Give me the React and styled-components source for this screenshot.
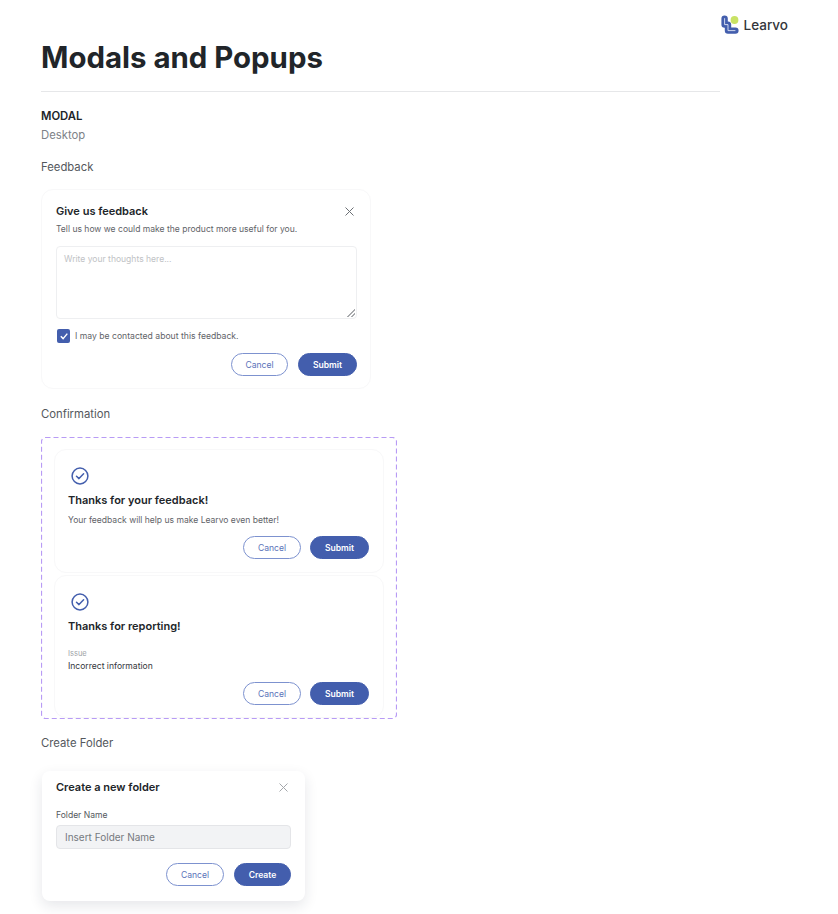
import React from 'react'
import styled, { createGlobalStyle } from 'styled-components'

const GlobalStyle = createGlobalStyle`
  * { box-sizing: border-box; }
  body {
    margin: 0;
    background: #fff;
    font-family: "Inter", "Liberation Sans", sans-serif;
    color: #212529;
  }
`

const Page = styled.div`
  width: 838px;
  height: 914px;
  overflow: hidden;
  padding: 14px 50px 0 41px;
  display: flex;
  flex-direction: column;
`

const LogoRow = styled.div`
  display: flex;
  justify-content: flex-end;
  align-items: center;
  gap: 5px;
  height: 21px;
`

const LogoText = styled.span`
  font-size: 13.5px;
  font-weight: 500;
  color: #33363b;
`

const Title = styled.h1`
  margin: 5px 0 0;
  font-size: 29.4px;
  line-height: 35px;
  font-weight: 700;
  color: #212529;
`

const Divider = styled.hr`
  width: 679px;
  margin: 16px 0 0;
  border: 0;
  border-top: 1px solid #e6e7e9;
`

const SectionName = styled.div`
  margin-top: 17px;
  font-size: 11.3px;
  line-height: 14px;
  font-weight: 600;
`

const Platform = styled.div`
  margin-top: 5px;
  font-size: 11.3px;
  line-height: 14px;
  color: #7d8287;
`

const GroupLabel = styled.div`
  margin-top: ${p => p.$top || 18}px;
  font-size: 11.3px;
  line-height: 14px;
  color: #54585d;
`

const Card = styled.section`
  width: ${p => p.$width || 330}px;
  height: ${p => p.$height}px;
  margin-top: ${p => p.$top || 0}px;
  padding: ${p => p.$pad || '14px 13px 0 14px'};
  background: #fff;
  border: 1px solid #f8f8f9;
  border-radius: 12px;
  display: flex;
  flex-direction: column;
  flex-shrink: 0;
`

const FolderCard = styled(Card)`
  margin-left: 1px;
  border: 0;
  border-radius: 8px;
  box-shadow: 0 5px 14px rgba(30, 40, 60, 0.11);
`

const CardHead = styled.div`
  display: flex;
  justify-content: space-between;
  align-items: center;
`

const CardTitle = styled.h2`
  margin: ${p => p.$top || 0}px 0 0;
  font-size: 11px;
  line-height: 14px;
  font-weight: 600;
  color: #212529;
`

const CloseBtn = styled.button`
  border: 0;
  padding: 0;
  margin-right: 2px;
  background: none;
  display: flex;
  color: ${p => p.$color || '#6c7075'};
`

const Hint = styled.p`
  margin: ${p => p.$top || 5}px 0 0;
  font-size: 8.55px;
  line-height: 12px;
  color: #5f6368;
`

const Thoughts = styled.textarea`
  display: block;
  width: 301px;
  height: 73px;
  margin-top: 11px;
  padding: 6px 7px;
  border: 1px solid #eeeff1;
  border-radius: 4px;
  font-family: inherit;
  font-size: 8.55px;
  line-height: 12px;
  outline: none;
  &::placeholder { color: #c0c2c5; }
  &::-webkit-resizer {
    background: linear-gradient(135deg, transparent 48%, #a8aaad 48% 58%, transparent 58% 72%, #a8aaad 72% 82%, transparent 82%) no-repeat right 1px bottom 1px / 8px 8px;
  }
`

const CheckRow = styled.label`
  display: flex;
  align-items: center;
  gap: 5px;
  margin-top: 10px;
  margin-left: 1px;
  font-size: 8.65px;
  color: #5f6368;
`

const CheckBox = styled.span`
  width: 13px;
  height: 14px;
  border-radius: 2px;
  background: #435ead;
  display: flex;
  align-items: center;
  justify-content: center;
`

const Actions = styled.div`
  display: flex;
  justify-content: flex-end;
  gap: ${p => p.$gap || 10}px;
  margin-top: ${p => p.$top || 10}px;
`

const Pill = styled.button`
  width: ${p => p.$width || 58}px;
  height: 23px;
  padding: 0;
  border-radius: 12px;
  border: 1px solid ${p => (p.$primary ? '#435ead' : '#7d92cf')};
  background: ${p => (p.$primary ? '#435ead' : '#fff')};
  color: ${p => (p.$primary ? '#fff' : '#5a72b9')};
  font-family: inherit;
  font-size: 8.55px;
  font-weight: ${p => (p.$primary ? 600 : 400)};
`

const DashedFrame = styled.div`
  position: relative;
  width: 356px;
  height: 282px;
  margin-top: 16px;
  padding: 12px 13px 0 13px;
  display: flex;
  flex-direction: column;
  gap: 2px;
  overflow: hidden;
`

const DashedLine = styled.svg`
  position: absolute;
  inset: 0;
  width: 100%;
  height: 100%;
  pointer-events: none;
`

const TickWrap = styled.div`
  display: flex;
  margin-left: 3px;
`

const IssueLabel = styled.div`
  margin-top: 16px;
  font-size: 7.5px;
  line-height: 10px;
  color: #a0a3a7;
`

const IssueValue = styled.div`
  margin-top: 1px;
  font-size: 8.55px;
  line-height: 12px;
  color: #33363b;
`

const FieldLabel = styled.div`
  margin-top: 15px;
  font-size: 8.55px;
  line-height: 12px;
  color: #54585d;
`

const FolderInput = styled.input`
  display: block;
  width: 235px;
  height: 24px;
  margin-top: 4px;
  padding: 0 8px;
  background: #f2f3f5;
  border: 1px solid #e4e5e8;
  border-radius: 4px;
  font-family: inherit;
  font-size: 10px;
  outline: none;
  &::placeholder { color: #75797e; }
`

const CloseIcon = () => (
  <svg width="11" height="11" viewBox="0 0 11 11" fill="none" stroke="currentColor" strokeWidth="1">
    <path d="M1.5 1.5l8 8M9.5 1.5l-8 8" />
  </svg>
)

const Tick = () => (
  <svg width="18" height="18" viewBox="0 0 18 18" fill="none" stroke="#435ead" strokeWidth="1.5" strokeLinecap="round" strokeLinejoin="round">
    <circle cx="9" cy="9" r="7.9" />
    <path d="M5.5 9.2l2.5 2.4 4.6-4.8" />
  </svg>
)

const Logo = () => (
  <svg width="18" height="19" viewBox="0 0 18 19" fill="none">
    <path d="M3.6 3.6v6h3.4v6h7.4" stroke="#435ead" strokeWidth="6.4" strokeLinecap="round" strokeLinejoin="round" />
    <path d="M3.6 3.6v6h3.4v6h7" stroke="#dfe5f5" strokeWidth="0.9" strokeLinecap="round" strokeLinejoin="round" />
    <circle cx="13.5" cy="5" r="4.5" fill="#fff" />
    <circle cx="13.5" cy="5" r="3.9" fill="#c9e265" />
  </svg>
)

const CheckMark = () => (
  <svg width="10" height="10" viewBox="0 0 10 10" fill="none" stroke="#fff" strokeWidth="1.4">
    <path d="M1.8 5.2l2.3 2.4 4.2-5" />
  </svg>
)

const App = () => (
  <Page>
    <GlobalStyle />
    <LogoRow>
      <Logo />
      <LogoText>Learvo</LogoText>
    </LogoRow>
    <Title>Modals and Popups</Title>
    <Divider />
    <SectionName>MODAL</SectionName>
    <Platform>Desktop</Platform>

    <GroupLabel>Feedback</GroupLabel>
    <Card $height={200} $top={15}>
      <CardHead>
        <CardTitle>Give us feedback</CardTitle>
        <CloseBtn><CloseIcon /></CloseBtn>
      </CardHead>
      <Hint>Tell us how we could make the product more useful for you.</Hint>
      <Thoughts placeholder="Write your thoughts here..." />
      <CheckRow>
        <CheckBox><CheckMark /></CheckBox>
        I may be contacted about this feedback.
      </CheckRow>
      <Actions>
        <Pill $width={57}>Cancel</Pill>
        <Pill $primary $width={59}>Submit</Pill>
      </Actions>
    </Card>

    <GroupLabel $top={18}>Confirmation</GroupLabel>
    <DashedFrame>
      <DashedLine>
        <rect x="0.5" y="0.5" width="355" height="281" rx="4" fill="none" stroke="#b89bf5" strokeWidth="1.2" strokeDasharray="5 3" />
      </DashedLine>
      <Card $height={124} $pad="17px 14px 0 13px">
        <TickWrap><Tick /></TickWrap>
        <CardTitle $top={8}>Thanks for your feedback!</CardTitle>
        <Hint $top={7}>Your feedback will help us make Learvo even better!</Hint>
        <Actions $top={10} $gap={9}>
          <Pill>Cancel</Pill>
          <Pill $primary $width={59}>Submit</Pill>
        </Actions>
      </Card>
      <Card $height={143} $pad="17px 14px 0 13px">
        <TickWrap><Tick /></TickWrap>
        <CardTitle $top={8}>Thanks for reporting!</CardTitle>
        <IssueLabel>Issue</IssueLabel>
        <IssueValue>Incorrect information</IssueValue>
        <Actions $top={10} $gap={9}>
          <Pill>Cancel</Pill>
          <Pill $primary $width={59}>Submit</Pill>
        </Actions>
      </Card>
    </DashedFrame>

    <GroupLabel $top={17}>Create Folder</GroupLabel>
    <FolderCard $width={263} $height={130} $top={21} $pad="9px 14px 0 14px">
      <CardHead>
        <CardTitle>Create a new folder</CardTitle>
        <CloseBtn $color="#a4a7ab"><CloseIcon /></CloseBtn>
      </CardHead>
      <FieldLabel>Folder Name</FieldLabel>
      <FolderInput placeholder="Insert Folder Name" />
      <Actions $top={14}>
        <Pill>Cancel</Pill>
        <Pill $primary $width={57}>Create</Pill>
      </Actions>
    </FolderCard>
  </Page>
)

export default App
